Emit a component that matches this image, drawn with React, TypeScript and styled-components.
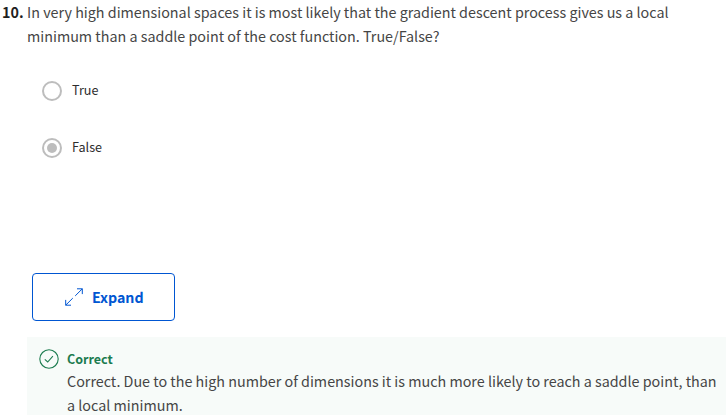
import React from "react";
import styled, { createGlobalStyle } from "styled-components";

const GlobalStyle = createGlobalStyle`
  * { box-sizing: border-box; }
  body { margin: 0; background: #fff; overflow: hidden; }
`;

const Page = styled.main`
  display: flex;
  flex-direction: column;
  width: 726px;
  height: 415px;
  overflow: hidden;
  font-family: "Noto Sans CJK SC", "Noto Sans", sans-serif;
  font-size: 14.335px;
  line-height: 24px;
  color: #454545;
`;

const Question = styled.section`
  display: flex;
  flex: none;
  height: 48px;
  padding-left: 2px;
`;

const Number = styled.span`
  flex: 0 0 25px;
  font-weight: 700;
  color: #1f1f1f;
`;

const Text = styled.p`
  margin: 0;
  white-space: nowrap;
`;

const Options = styled.div`
  display: flex;
  flex: none;
  flex-direction: column;
  gap: 37px;
  padding: 33px 0 0 42px;
`;

const Option = styled.label`
  display: flex;
  align-items: center;
  gap: 10px;
  height: 20px;
  font-size: 12.6px;
  line-height: 20px;
  color: #2d2d2d;
`;

const OptionLabel = styled.span`
  padding-bottom: 2px;
`;

const Radio = styled.span<{ $checked?: boolean }>`
  display: grid;
  place-items: center;
  width: 20px;
  height: 20px;
  border: 2px solid #bdbdbd;
  border-radius: 50%;
  &::after {
    content: "";
    width: 10px;
    height: 10px;
    border-radius: 50%;
    background: ${(p) => (p.$checked ? "#bdbdbd" : "transparent")};
  }
`;

const ExpandButton = styled.button`
  display: flex;
  flex: none;
  align-items: center;
  width: 143px;
  height: 48px;
  margin: 115px 0 0 32px;
  padding: 0 0 0 32px;
  gap: 9px;
  border: 1px solid #0056d2;
  border-radius: 4px;
  background: #fff;
  color: #0056d2;
  font: 700 14.2px/24px "Noto Sans CJK SC", sans-serif;
`;

const Feedback = styled.section`
  display: flex;
  flex: 1;
  gap: 8px;
  margin: 16px 0 0 27px;
  padding: 12px 0 0 12px;
  background: #f7fbf9;
`;

const Verdict = styled.div`
  height: 20px;
  font-size: 12.5px;
  font-weight: 700;
  line-height: 20px;
  color: #1d7c50;
`;

const Icon = styled.svg`
  display: block;
  flex: none;
  fill: none;
  stroke: currentColor;
`;

const Check = styled(Icon)`
  color: #1d7c50;
`;

export default function App() {
  return (
    <>
      <GlobalStyle />
      <Page>
        <Question>
          <Number>10.</Number>
          <div>
            <Text>In very high dimensional spaces it is most likely that the gradient descent process gives us a local</Text>
            <Text>minimum than a saddle point of the cost function. True/False?</Text>
          </div>
        </Question>
        <Options>
          <Option><Radio /><OptionLabel>True</OptionLabel></Option>
          <Option><Radio $checked /><OptionLabel>False</OptionLabel></Option>
        </Options>
        <ExpandButton>
          <Icon width="18" height="18" viewBox="0 0 18 18" strokeWidth="1">
            <path d="M12 .8h5.3v5.3M17.3.8l-7.1 7.1M7.8 10.1l-7.1 7.1M.7 11.9v5.3h5.3" />
          </Icon>
          Expand
        </ExpandButton>
        <Feedback>
          <Check width="20" height="20" viewBox="0 0 20 20" strokeWidth="1.1">
            <circle cx="10" cy="10" r="9.2" />
            <path d="M5.8 10.3l2.9 2.7 5.2-5.8" />
          </Check>
          <div>
            <Verdict>Correct</Verdict>
            <Text>Correct. Due to the high number of dimensions it is much more likely to reach a saddle point, than</Text>
            <Text>a local minimum.</Text>
          </div>
        </Feedback>
      </Page>
    </>
  );
}
